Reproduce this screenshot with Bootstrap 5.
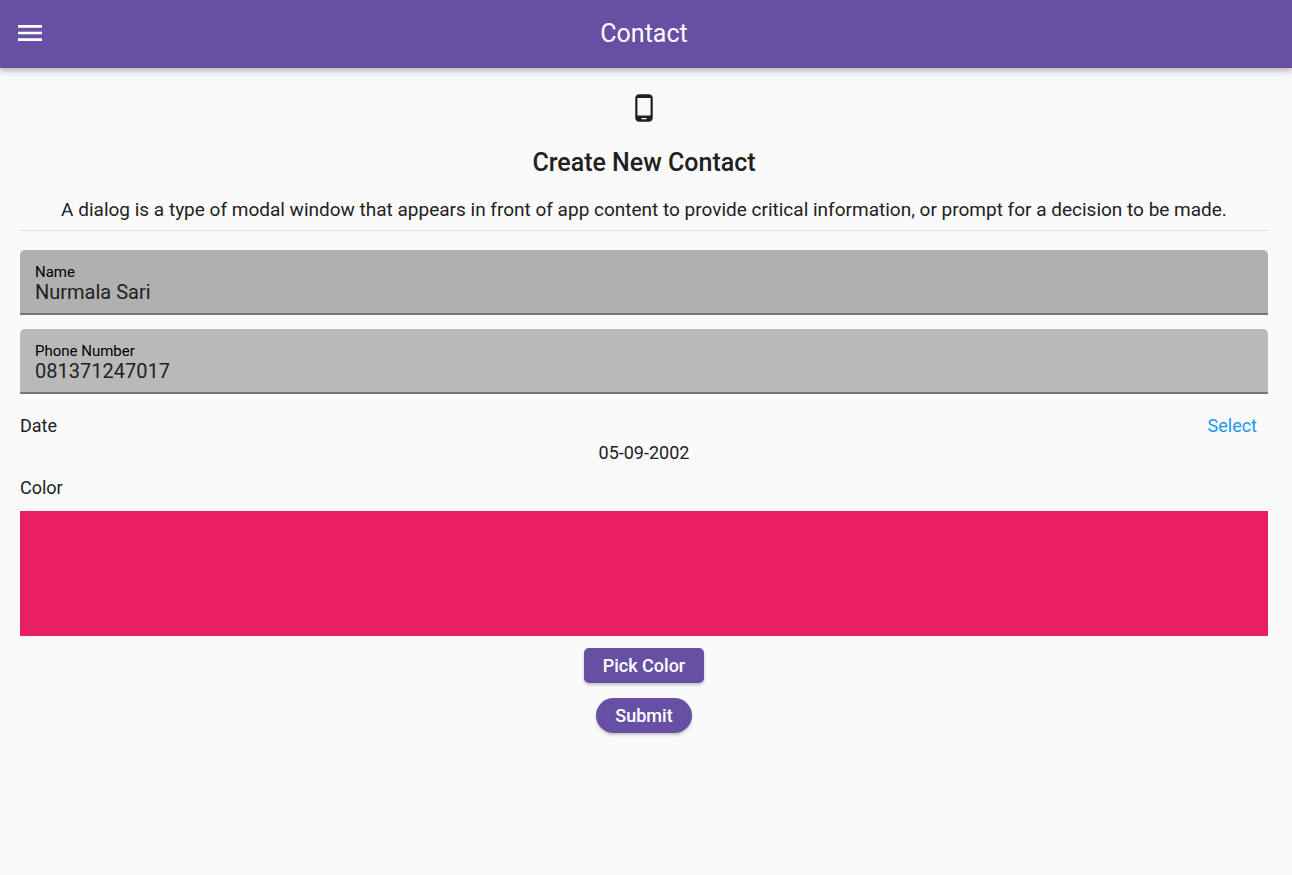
<!DOCTYPE html>
<html lang="en">
<head>
<meta charset="utf-8">
<meta name="viewport" content="width=device-width, initial-scale=1">
<title>Contact</title>
<link href="https://cdn.jsdelivr.net/npm/bootstrap@5.3.0/dist/css/bootstrap.min.css" rel="stylesheet">
<style>
  :root { --brand: #6750a4; --ink: #212121; }
  body { font-family: Roboto, "Liberation Sans", sans-serif; font-size: 18px; line-height: 20px; color: var(--ink); background: #fafafa; }
  .app-bar { display: grid; grid-template-columns: 48px 1fr 48px; align-items: center; height: 68px; padding: 0 10px 2px 6px; background: var(--brand); color: #fff; box-shadow: 0 2px 5px rgba(0,0,0,.2), 0 4px 8px rgba(0,0,0,.12); }
  .menu-btn { width: 48px; height: 48px; color: #fff; }
  .app-title { font-size: 25px; line-height: 30px; font-weight: 400; padding-top: 2px; }
  .page { padding: 25px 24px 25px 20px; }
  .page-title { font-size: 25px; line-height: 30px; font-weight: 500; margin: 25px 0 20px; }
  .intro { font-size: 19px; line-height: 24px; padding-bottom: 8px; border-bottom: 1px solid #dcdcdc; margin-bottom: 19px; }
  .field { height: 65px; padding: 14px 15px 0; background: #b0b0b0; border-bottom: 2px solid #757575; border-radius: 5px 5px 0 0; margin-bottom: 14px; }
  .field-phone { background: #b9b9b9; }
  .field label { font-size: 15px; line-height: 17px; color: #000; }
  .field input { font-size: 20px; line-height: 22px; color: var(--ink); border: 0; background: none; padding: 0; outline-offset: 4px; }
  .date-row { margin: 22px 0 7px; }
  .select-btn { font-size: 18px; line-height: 20px; color: #2196f3; padding: 0 11px; border: 0; }
  .color-label { margin-top: 15px; }
  .swatch { height: 125px; background: #e91e63; margin: 13px 0 12px; }
  .btn-brand { --bs-btn-color: #fff; --bs-btn-bg: var(--brand); --bs-btn-hover-color: #fff; --bs-btn-hover-bg: #5b4694; --bs-btn-active-color: #fff; --bs-btn-active-bg: #5b4694; height: 35px; padding: 0 19px; border: 0; border-radius: 5px; font-size: 18px; line-height: 20px; font-weight: 500; box-shadow: 0 2px 3px rgba(0,0,0,.22); }
  .actions { gap: 15px; }
</style>
</head>
<body>
<header class="app-bar">
  <button type="button" class="btn menu-btn border-0 p-0 d-flex align-items-center justify-content-center" aria-label="Open menu">
    <svg width="32" height="32" viewBox="0 0 24 24" fill="currentColor" aria-hidden="true"><path d="M3 18h18v-2H3v2zm0-5h18v-2H3v2zm0-7v2h18V6H3z"/></svg>
  </button>
  <h1 class="app-title text-center mb-0">Contact</h1>
</header>
<main class="page">
  <svg class="d-block mx-auto" width="30" height="30" viewBox="0 0 24 24" fill="currentColor" aria-hidden="true"><path d="M16 1H8C6.340 1 5 2.340 5 4v16c0 1.660 1.340 3 3 3h8c1.660 0 3-1.340 3-3V4c0-1.660-1.340-3-3-3zm-2 20h-4v-1h4v1zm3.250-3H6.750V4h10.500v14z"/></svg>
  <h2 class="page-title text-center">Create New Contact</h2>
  <p class="intro text-center">A dialog is a type of modal window that appears in front of app content to provide critical information, or prompt for a decision to be made.</p>
  <form>
    <div class="field">
      <label class="d-block" for="name">Name</label>
      <input class="d-block w-100" id="name" type="text" value="Nurmala Sari">
    </div>
    <div class="field field-phone">
      <label class="d-block" for="phone">Phone Number</label>
      <input class="d-block w-100" id="phone" type="tel" value="081371247017">
    </div>
    <div class="date-row d-flex justify-content-between">
      <span>Date</span>
      <button type="button" class="btn select-btn">Select</button>
    </div>
    <div class="text-center">05-09-2002</div>
    <div class="color-label">Color</div>
    <div class="swatch"></div>
    <div class="actions d-flex flex-column align-items-center">
      <button type="button" class="btn btn-brand">Pick Color</button>
      <button type="submit" class="btn btn-brand rounded-pill">Submit</button>
    </div>
  </form>
</main>
<script src="https://cdn.jsdelivr.net/npm/bootstrap@5.3.0/dist/js/bootstrap.bundle.min.js"></script>
</body>
</html>
